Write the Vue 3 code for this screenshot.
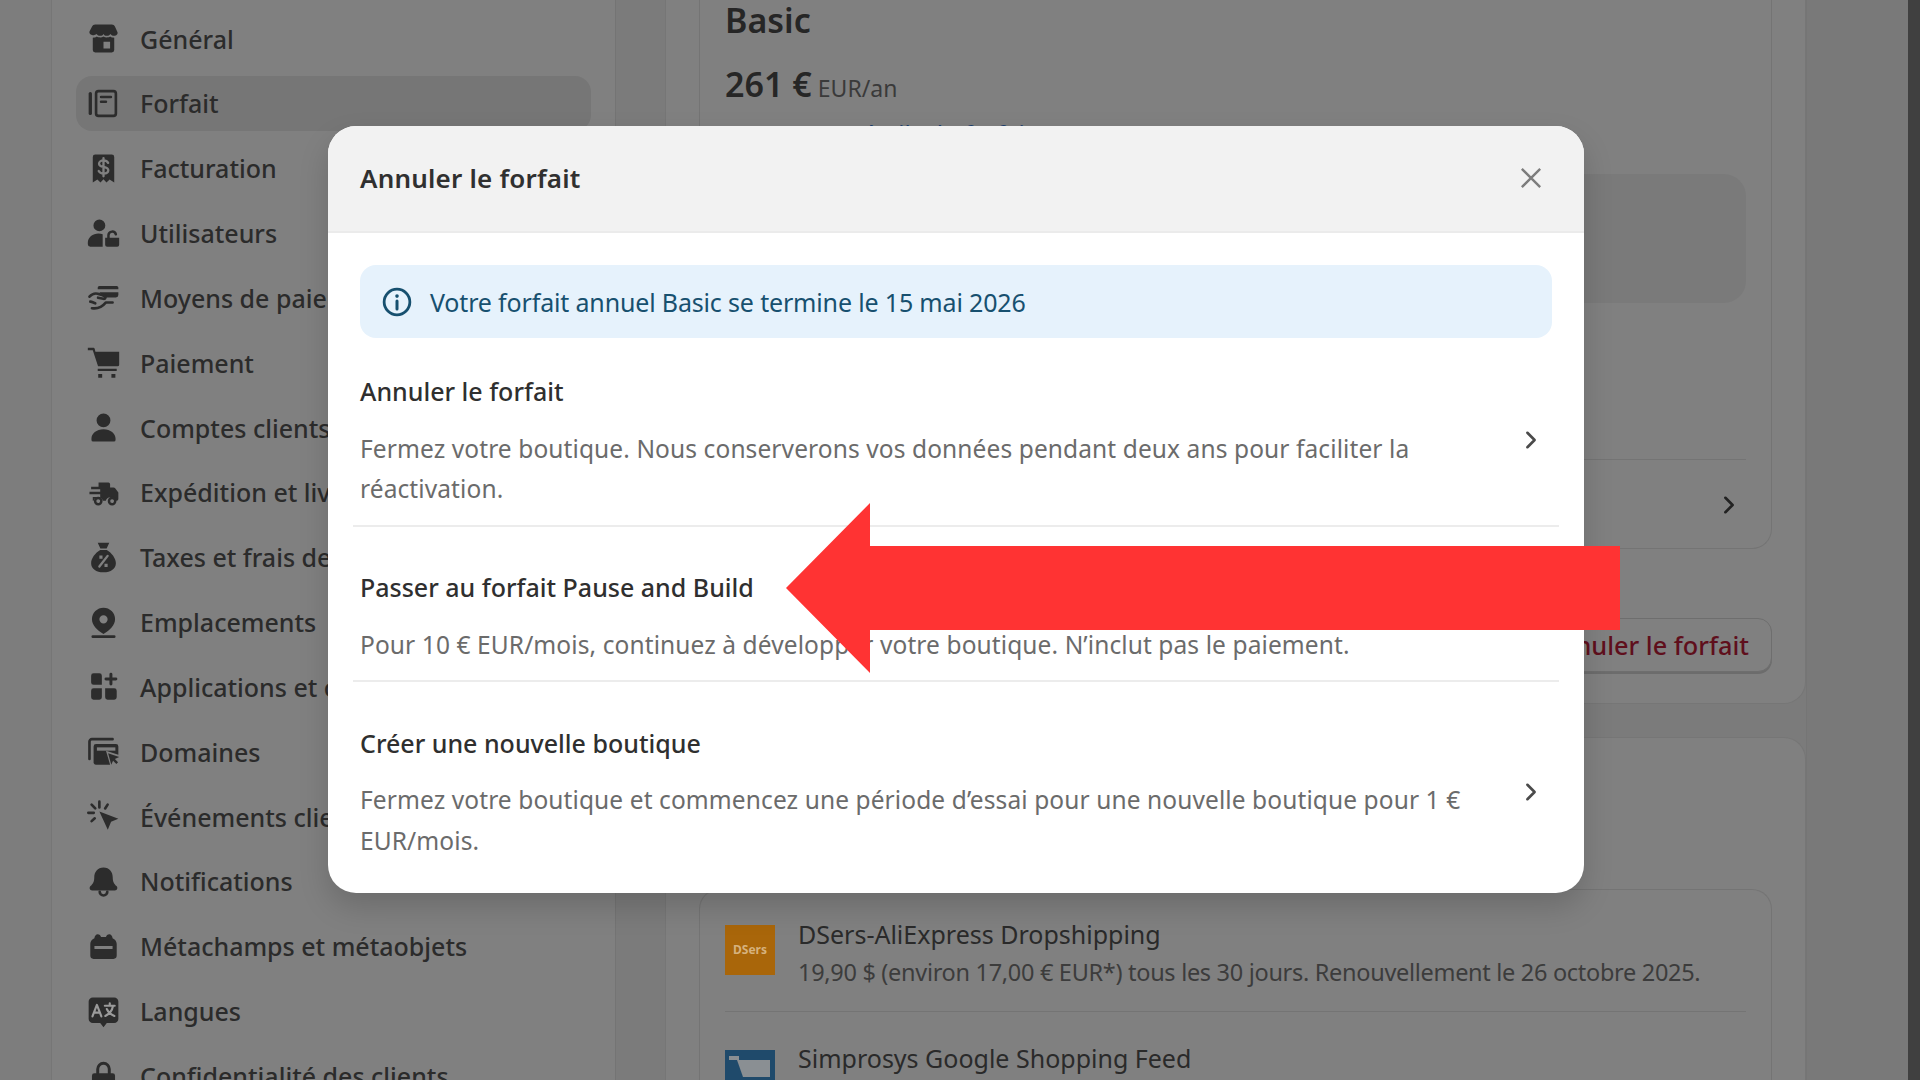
<script setup>
const ink = '#2c2c2c'
const bg = '#808080'
const navItems = [
  { label: 'Général', paths: [
    { d: 'M5 1.500h10c1 0 1.500.4 2 1.400l1.500 3.300c.3 1.200-.8 2.200-2 2.200-1 0-1.800-.5-2.300-1.200-.5.7-1.300 1.200-2.200 1.200s-1.700-.5-2-1.200c-.3.700-1.100 1.200-2 1.200s-1.700-.5-2.200-1.200C5.300 7.500 4.500 8 3.500 8c-1.200 0-2.300-1-2-2.200L3 2.900C3.500 1.900 4 1.500 5 1.500Z' },
    { d: 'M3.500 9.500c1 0 1.900-.2 2.500-.7.8.6 2.800.9 4 0 1.200.9 3.200.6 4 0 .6.5 1.500.7 2.500.7V17a1.500 1.500 0 0 1-1.500 1.500H5A1.500 1.500 0 0 1 3.500 17V9.500Zm6.500 2.500v4h4v-4h-4Z', evenodd: true }
  ] },
  { label: 'Forfait', active: true, paths: [
    { d: 'M2 4v12', stroke: ink, width: 2 },
    { d: 'M7 2.500h9a1.500 1.500 0 0 1 1.500 1.500v12a1.500 1.500 0 0 1-1.500 1.500H7A1.500 1.500 0 0 1 5.500 16V4A1.500 1.500 0 0 1 7 2.500Z', stroke: ink, width: 1.600 },
    { d: 'M8.500 6h6M8.500 9h3', stroke: ink, width: 1.500 }
  ] },
  { label: 'Facturation', paths: [
    { d: 'M5 1.500h10A1.500 1.500 0 0 1 16.500 3v15.500l-2.800-1.800-1.900 1.800-1.800-2-1.800 2-1.900-1.800-2.800 1.800V3A1.500 1.500 0 0 1 5 1.500Z' },
    { d: 'M12.800 6.600c-.5-1-1.600-1.500-2.800-1.500-1.500 0-2.700.8-2.700 2 0 2.700 5.600 1.200 5.600 3.900 0 1.200-1.200 2-2.900 2-1.300 0-2.400-.5-2.900-1.500M10 3.700v11', stroke: bg, width: 1.400 }
  ] },
  { label: 'Utilisateurs', paths: [
    { d: 'M7.500 1.500a3.600 3.600 0 1 1 0 7.200 3.600 3.600 0 0 1 0-7.200ZM.5 15.500c0-3.200 3-5.500 6.500-5.500 1 0 1.800.2 2.500.5V18H2A1.500 1.500 0 0 1 .5 16.500v-1Z' },
    { d: 'M11 12.500h8.500v4.300a1.200 1.200 0 0 1-1.200 1.200h-6.100a1.200 1.200 0 0 1-1.200-1.200v-4.300Z' },
    { d: 'M13 12.500v-1.500a2.300 2.300 0 0 1 4.500-.5', stroke: ink, width: 1.500 }
  ] },
  { label: 'Moyens de paiement', paths: [
    { d: 'M7.500 3h10.500a1 1 0 0 1 1 1v1H6.500V4a1 1 0 0 1 1-1ZM7.500 6.800H19v1.700A1.500 1.500 0 0 1 17.500 10H10Z' },
    { d: 'M1.500 9.500c1.500-1.700 3-2.300 5-1.800l4 1.300c1.200.5.700 2-.6 1.800l-3.200-.7M2 12.500c1 0 1.800.6 3 1M3 16.500c3 .5 6-.5 8.500-3.500h4', stroke: ink, width: 1.600 }
  ] },
  { label: 'Paiement', paths: [
    { d: 'M.5 1h3.200c.5 0 .9.3 1 .8l.4 1.700h14.400v7.800a1 1 0 0 1-1 1H6.700L3.500 2.500h-3V1Z' },
    { d: 'M6.500 13.800H18v1.400H6.500zM6.800 17h2.400v2.300H6.800zM14.800 17h2.400v2.300h-2.400z' }
  ] },
  { label: 'Comptes clients', paths: [
    { d: 'M10 1.500a4.200 4.200 0 1 1 0 8.400 4.200 4.200 0 0 1 0-8.400ZM10 11c4.300 0 7.300 2.600 7.300 5.700v.8a1 1 0 0 1-1 1H3.700a1 1 0 0 1-1-1v-.8C2.700 13.600 5.700 11 10 11Z' }
  ] },
  { label: 'Expédition et livraison', paths: [
    { d: 'M7 4h6a1 1 0 0 1 1 1v2h2c.5 0 .9.2 1.200.6l1.800 2.400v4a1 1 0 0 1-1 1h-1a2.900 2.900 0 0 0-5.600 0H9.600a2.900 2.900 0 0 0-5.600 0H3.500v-2.200H8V11H1.500V9.500H8V8H2.500V6.500H7V4Z' },
    { d: 'M6.800 13.300a1.900 1.900 0 1 1 0 3.800 1.900 1.900 0 0 1 0-3.800ZM15.200 13.300a1.900 1.900 0 1 1 0 3.800 1.900 1.900 0 0 1 0-3.800Z', stroke: ink, width: 1.500 }
  ] },
  { label: 'Taxes et frais de douane', paths: [
    { d: 'M6.500 1h7l-1.600 3.500H8.100L6.500 1ZM8 5.500h4c3 1.800 5.500 5 5.500 8 0 3.300-3 5.500-7.500 5.500s-7.500-2.200-7.500-5.500c0-3 2.500-6.200 5.500-8Z' },
    { d: 'M7.500 15.500l5-6.500', stroke: bg, width: 1.400 },
    { d: 'M7.500 8.800h1.900v1.900H7.500zM10.600 13.800h1.900v1.900h-1.900z', fill: bg }
  ] },
  { label: 'Emplacements', paths: [
    { d: 'M10 1a7 7 0 0 1 7 7c0 3.600-3.200 6.700-7 9C6.200 14.700 3 11.600 3 8a7 7 0 0 1 7-7Zm0 4.600a2.500 2.500 0 1 0 0 5 2.500 2.500 0 0 0 0-5Z', evenodd: true },
    { d: 'M3.500 18.600h13', stroke: ink, width: 1.600 }
  ] },
  { label: 'Applications et canaux', paths: [
    { d: 'M4 2h3.500A1.500 1.500 0 0 1 9 3.500V9H4A1.500 1.500 0 0 1 2.500 7.500v-4A1.500 1.500 0 0 1 4 2ZM2.500 12.500A1.500 1.500 0 0 1 4 11h5v5.500A1.500 1.500 0 0 1 7.500 18H4a1.500 1.500 0 0 1-1.500-1.500v-4ZM11 11h5.500a1.500 1.500 0 0 1 1.500 1.500v4a1.500 1.500 0 0 1-1.500 1.500h-4a1.500 1.500 0 0 1-1.500-1.500V11Z' },
    { d: 'M14.500 2.500v6M11.500 5.500h6', stroke: ink, width: 1.800 }
  ] },
  { label: 'Domaines', paths: [
    { d: 'M1.500 14.500V4A1.500 1.500 0 0 1 3 2.500h12.500', stroke: ink, width: 1.600 },
    { d: 'M5.500 5.500h12A1.500 1.500 0 0 1 19 7v5l-7.500-2.500 2.500 8.500H5.500A1.500 1.500 0 0 1 4 17V7a1.500 1.500 0 0 1 1.500-1.500Z' },
    { d: 'M6 7.500h11.200v2H6z', fill: bg },
    { d: 'M12.800 11l6.700 2.300-2.600 1.200 1.900 2-1 1.100-2-2-1.100 2.400-1.900-7Z' }
  ] },
  { label: 'Événements clients', paths: [
    { d: 'M7.500 7l11.500 4.300-4.400 1.900-2 4.800L7.500 7Z' },
    { d: 'M7.500 1v3.500M2.800 2.800l2.200 2.300M.8 7.800h3.300M2.800 12.800l1.900-1.700M12.500 2.800l-1.500 2.300', stroke: ink, width: 1.600 }
  ] },
  { label: 'Notifications', paths: [
    { d: 'M10 1.500c3.600 0 5.600 2.700 5.600 6 0 2.800 1 4 2.300 5.300 1 1 .4 2.700-1 2.700H3.100c-1.400 0-2-1.700-1-2.700C3.400 11.500 4.400 10.300 4.400 7.500c0-3.300 2-6 5.600-6Z' },
    { d: 'M7.700 16.200a2.300 2.300 0 0 0 4.600 0', stroke: ink, width: 1.600 }
  ] },
  { label: 'Métachamps et métaobjets', paths: [
    { d: 'M4.500 5c0-1.500 1-2.500 2-2.500s1.800.6 2 1.800h3c.2-1.200 1-1.800 2-1.800s2 1 2 2.500c1.500.7 2.500 1.900 2.500 3.500v7a2 2 0 0 1-2 2H4a2 2 0 0 1-2-2v-7C2 6.900 3 5.700 4.500 5Z' },
    { d: 'M4.500 9.700h11v1.800h-11z', fill: bg }
  ] },
  { label: 'Langues', paths: [
    { d: 'M3.500 1.500h13a2.500 2.500 0 0 1 2.500 2.500v10.500a2.500 2.500 0 0 1-2.500 2.500H12l-2 2.500-2-2.500H3.500A2.500 2.500 0 0 1 1 14.500V4a2.500 2.500 0 0 1 2.500-2.500Z' },
    { d: 'M3.300 13L6 6l2.700 7M4.300 10.700h3.400M10.800 6.500h6M13.800 5v1.500M15.800 6.500c-.5 2.700-2.300 5-4.700 6.200M12 8.500c.8 1.800 2.300 3.200 4.600 4.200', stroke: '#9a9a9a', width: 1.300 }
  ] },
  { label: 'Confidentialité des clients', paths: [
    { d: 'M4.500 8h11A1.500 1.500 0 0 1 17 9.500v7a1.500 1.500 0 0 1-1.500 1.500h-11A1.500 1.500 0 0 1 3 16.500v-7A1.500 1.500 0 0 1 4.500 8Z' },
    { d: 'M6.500 8V5.500a3.500 3.500 0 0 1 7 0V8', stroke: ink, width: 1.800 }
  ] }
]

const options = [
  { title: 'Annuler le forfait', lines: 'Fermez votre boutique. Nous conserverons vos données pendant deux ans pour faciliter la réactivation.', chevron: true },
  { title: 'Passer au forfait Pause and Build', lines: 'Pour 10 € EUR/mois, continuez à développer votre boutique. N’inclut pas le paiement.', chevron: false },
  { title: 'Créer une nouvelle boutique', lines: 'Fermez votre boutique et commencez une période d’essai pour une nouvelle boutique pour 1 € EUR/mois.', chevron: true }
]
</script>

<template>
  <div class="screen">
    <div class="page">
      <aside class="side-gutter"></aside>
      <nav class="sidebar">
        <div v-for="item in navItems" :key="item.label" class="nav-row" :class="{ active: item.active }">
          <svg class="nav-icon" viewBox="0 0 20 20">
            <path
              v-for="(p, i) in item.paths"
              :key="i"
              :d="p.d"
              :fill="p.stroke ? 'none' : (p.fill || ink)"
              :fill-rule="p.evenodd ? 'evenodd' : 'nonzero'"
              :stroke="p.stroke || 'none'"
              :stroke-width="p.width || 1.400"
              stroke-linecap="round"
              stroke-linejoin="round"
            />
          </svg>
          <span class="nav-label">{{ item.label }}</span>
        </div>
      </nav>
      <main class="main">
        <section class="outer plan-outer">
          <div class="inner plan-inner">
            <h2 class="plan-name">Basic</h2>
            <div class="plan-price"><strong>261 €</strong> <span>EUR/an</span></div>
            <div class="plan-link">Détails du forfait</div>
            <div class="plan-box"></div>
            <div class="plan-more">
              <svg class="chev dark" viewBox="0 0 20 20"><path d="M7 4l6 6-6 6" /></svg>
            </div>
          </div>
          <div class="plan-actions">
            <span class="cancel-btn">Annuler le forfait</span>
          </div>
        </section>
        <section class="outer apps-outer">
          <div class="inner apps-inner">
            <div class="app-row first">
              <div class="logo dsers">DSers</div>
              <div class="app-text">
                <div class="app-title">DSers-AliExpress Dropshipping</div>
                <div class="app-sub">19,90 $ (environ 17,00 € EUR*) tous les 30 jours. Renouvellement le 26 octobre 2025.</div>
              </div>
            </div>
            <div class="app-row second">
              <div class="logo simpro">
                <svg viewBox="0 0 50 50"><path d="M12 10H45V27H18Z" fill="#8a8f93" /><path d="M4 6h10v4H4z" fill="#8a8f93" /></svg>
              </div>
              <div class="app-text">
                <div class="app-title">Simprosys Google Shopping Feed</div>
              </div>
            </div>
          </div>
        </section>
      </main>
      <div class="page-rest"></div>
      <div class="edge"></div>
    </div>

    <div class="modal">
      <header class="modal-head">
        <h1>Annuler le forfait</h1>
        <svg class="close" viewBox="0 0 24 24"><path d="M2 2l20 20M22 2L2 22" /></svg>
      </header>
      <div class="modal-body">
        <div class="banner">
          <svg class="info" viewBox="0 0 28 28">
            <circle cx="14" cy="14" r="12" />
            <path d="M14 13v7.500" />
            <circle class="dot" cx="14" cy="8.500" r="1.700" />
          </svg>
          <span>Votre forfait annuel Basic se termine le 15 mai 2026</span>
        </div>
        <div v-for="o in options" :key="o.title" class="option">
          <div class="option-text">
            <div class="option-title">{{ o.title }}</div>
            <div class="option-desc">{{ o.lines }}</div>
          </div>
          <svg v-if="o.chevron" class="chev" viewBox="0 0 20 20"><path d="M7 4l6 6-6 6" /></svg>
        </div>
      </div>
    </div>

    <svg class="arrow" viewBox="0 0 836 170" aria-hidden="true">
      <polygon points="0,85 84,0 84,43 834,43 834,127 84,127 84,170" fill="#ff3333" />
    </svg>
  </div>
</template>

<style>
html, body { margin: 0; background: #7c7c7c; }
</style>

<style scoped>
.screen {
  position: relative;
  width: 1920px;
  height: 1080px;
  overflow: hidden;
  font-family: "Noto Sans", "Open Sans", sans-serif;
  color: #2a2a2a;
}
.page {
  display: grid;
  grid-template-columns: 51px 565px 1190px 102px 12px;
  height: 1080px;
  background: #7b7b7b;
}
.side-gutter { background: #7d7d7d; }
.sidebar {
  background: #808080;
  border-left: 1px solid #767676;
  border-right: 1px solid #747474;
  padding: 11px 24px 0 24px;
  display: flex;
  flex-direction: column;
  gap: 9.850px;
  box-sizing: border-box;
}
.nav-row {
  flex: 0 0 55px;
  display: flex;
  align-items: center;
  gap: 20px;
  padding-left: 11px;
  border-radius: 16px;
  white-space: nowrap;
}
.nav-row.active { background: #767676; }
.nav-icon { width: 33px; height: 33px; flex: none; }
.nav-label { font-size: 25px; color: #2b2b2b; font-weight: 500; }

.main {
  background: #7b7b7b;
  padding: 0 0 0 49px;
  display: flex;
  flex-direction: column;
  gap: 33px;
  box-sizing: border-box;
}
.outer {
  background: #808080;
  border: 1px solid #767676;
  border-radius: 0 0 22px 22px;
  box-sizing: border-box;
  padding: 0 33px;
}
.plan-outer { height: 704px; border-top: 0; }
.inner {
  border: 1.500px solid #747474;
  border-radius: 20px;
  padding: 0 25px;
  box-sizing: border-box;
}
.plan-inner { height: 549px; border-top: 0; border-radius: 0 0 20px 20px; }
.plan-name { margin: 0; font-size: 34px; font-weight: 600; line-height: 40px; color: #262626; }
.plan-price { margin-top: 23px; line-height: 42px; }
.plan-price strong { font-size: 34px; font-weight: 600; color: #262626; }
.plan-price span { font-size: 23px; color: #3a3a3a; margin-left: 2px; }
.plan-link { margin: 4px 0 0 120px; color: #1c3f6e; font-size: 24px; line-height: 36px; white-space: nowrap; }
.plan-box {
  margin-top: 22px;
  height: 129px;
  background: #7a7a7a;
  border-radius: 22px;
}
.plan-more {
  margin-top: 156px;
  border-top: 1.500px solid #747474;
  height: 90px;
  display: flex;
  align-items: center;
  justify-content: flex-end;
}
.plan-actions { display: flex; justify-content: flex-end; margin-top: 69px; }
.cancel-btn {
  color: #5f0f1c;
  font-size: 25.300px;
  font-weight: 500;
  line-height: 52px;
  padding: 0 22px;
  border: 1px solid #6e6e6e;
  border-radius: 14px;
  box-shadow: 0 2px 0 #6c6c6c;
  background: #808080;
}
.apps-outer { flex: 1; border-radius: 22px 22px 0 0; border-bottom: 0; padding-top: 151px; }
.apps-inner { border-bottom: 0; height: 250px; border-radius: 20px 20px 0 0; }
.app-row { display: flex; gap: 23px; }
.app-row.first { padding: 35px 0 21px; border-bottom: 1.500px solid #747474; }
.app-row.second { padding-top: 38px; }
.app-row.second .app-text { margin-top: -10px; }
.logo { width: 50px; height: 50px; flex: none; box-sizing: border-box; }
.dsers {
  background: #a9660a;
  color: #d6b27e;
  font-size: 12px;
  font-weight: 700;
  line-height: 50px;
  text-align: center;
}
.simpro { background: #1f4a6b; }
.simpro svg { display: block; width: 50px; height: 50px; }
.app-text { margin-top: -9px; white-space: nowrap; }
.app-title { font-size: 25px; line-height: 36px; color: #2a2a2a; }
.app-sub { font-size: 23.500px; line-height: 36px; color: #3c3c3c; margin-top: 2px; letter-spacing: -0.300px; }

.page-rest { background: #797979; border-left: 1px solid #757575; }
.edge { background: #404040; }

.modal {
  position: absolute;
  left: 328px;
  top: 126px;
  width: 1256px;
  height: 767px;
  background: #fff;
  border-radius: 28px;
  overflow: hidden;
  box-shadow: 0 14px 30px rgba(0, 0, 0, 0.16);
}
.modal-head {
  height: 107px;
  box-sizing: border-box;
  background: #f2f2f2;
  border-bottom: 2px solid #ebebeb;
  display: flex;
  align-items: center;
  justify-content: space-between;
  padding: 0 42px 2px 32px;
}
.modal-head h1 { margin: 0; font-size: 26px; font-weight: 600; color: #303030; letter-spacing: 0.200px; }
.close { width: 22px; height: 22px; }
.close path { fill: none; stroke: #7d7d7d; stroke-width: 2.600; }
.modal-body { padding: 32px 25px 0 25px; }
.banner {
  height: 73px;
  margin: 0 7px;
  background: #e6f2fc;
  border-radius: 16px;
  display: flex;
  align-items: center;
  gap: 18px;
  padding-left: 22px;
  color: #17506f;
  font-size: 25px;
  letter-spacing: -0.160px;
}
.info { width: 30px; height: 30px; flex: none; }
.info circle { fill: none; stroke: #17506f; stroke-width: 2.600; }
.info path { fill: none; stroke: #17506f; stroke-width: 2.800; stroke-linecap: round; }
.info .dot { fill: #17506f; stroke: none; }
.option {
  display: flex;
  align-items: center;
  justify-content: space-between;
  padding: 33.400px 7px 15.400px;
  margin-bottom: 7px;
  border-bottom: 2px solid #ececec;
}
.option:last-child { border-bottom: 0; margin-bottom: 0; }
.option-text { width: 1110px; }
.option-title { font-size: 25px; line-height: 40px; font-weight: 500; color: #2f2f2f; }
.option-desc { margin-top: 17.200px; font-size: 24.500px; line-height: 40.500px; color: #6b6b6b; letter-spacing: 0.100px; }
.chev { width: 24px; height: 24px; flex: none; margin-right: 9px; }
.chev path { fill: none; stroke: #4a4a4a; stroke-width: 2.200; stroke-linecap: round; stroke-linejoin: round; }
.chev.dark { margin-right: 5px; }
.chev.dark path { stroke: #222; }
.arrow {
  position: absolute;
  left: 786px;
  top: 503px;
  width: 836px;
  height: 170px;
}
</style>
